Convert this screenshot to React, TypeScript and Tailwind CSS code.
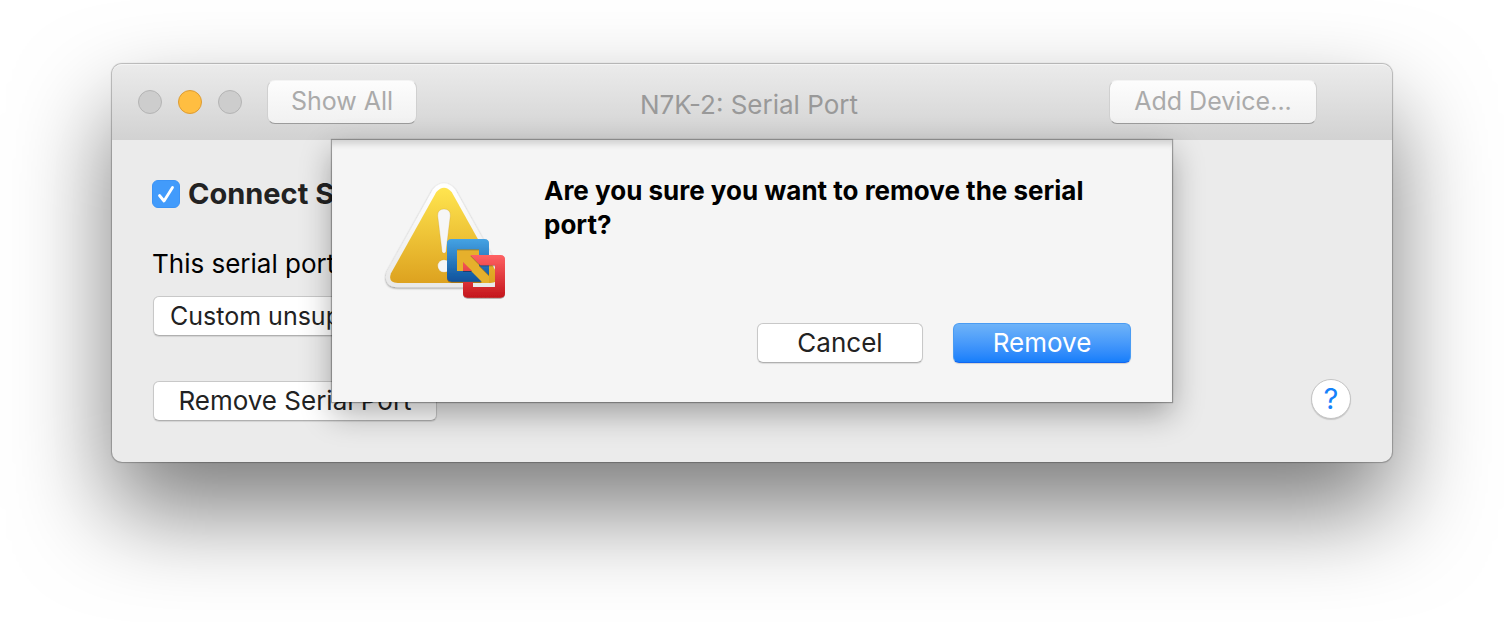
import React from "react";

function WarningIcon() {
  return (
    <svg viewBox="18 18 384 384" className="h-32 w-32 shrink-0" aria-hidden="true">
      <defs>
        <linearGradient id="tri" x1="0" y1="0" x2="0" y2="1">
          <stop offset="0" stopColor="#ffe54f" />
          <stop offset="1" stopColor="#dda21f" />
        </linearGradient>
        <linearGradient id="edge" x1="0" y1="0" x2="0" y2="1">
          <stop offset="0" stopColor="#ffffff" />
          <stop offset="1" stopColor="#e9e9e9" />
        </linearGradient>
        <linearGradient id="blue" x1="0" y1="0" x2="0" y2="1">
          <stop offset="0" stopColor="#45a3e4" />
          <stop offset="1" stopColor="#0f529c" />
        </linearGradient>
        <linearGradient id="red" gradientUnits="userSpaceOnUse" x1="0" y1="255" x2="0" y2="383">
          <stop offset="0" stopColor="#ff6163" />
          <stop offset="1" stopColor="#c4161c" />
        </linearGradient>
        <filter id="drop" x="-10%" y="-10%" width="120%" height="125%">
          <feDropShadow dx="0" dy="3" stdDeviation="3" floodColor="#000" floodOpacity="0.45" />
        </filter>
        <filter id="lift" x="-10%" y="-10%" width="120%" height="120%">
          <feDropShadow dx="0" dy="2" stdDeviation="1" floodColor="#200" floodOpacity="0.55" />
        </filter>
      </defs>
      <path
        d="M184 66Q207 40 230 66L366 310Q376 339 346 339H68Q38 339 48 310Z"
        fill="url(#edge)"
        stroke="url(#edge)"
        strokeWidth="26"
        strokeLinejoin="round"
        filter="url(#drop)"
      />
      <path d="M184 66Q207 40 230 66L366 310Q376 339 346 339H68Q38 339 48 310Z" fill="url(#tri)" />
      <g fill="#f6f6f6" stroke="#b98a1a" strokeOpacity="0.35" strokeWidth="2">
        <path d="M188 137Q188 117 207 117T226 137L213 244Q212 250 207 250T201 244Z" />
        <circle cx="207" cy="288" r="19" />
      </g>
      <path d="M246 238H312V286L342 316V339H322L264 280V303H246Z" fill="#e6b02c" />
      <g filter="url(#lift)">
        <path
          fill="url(#blue)"
          d="M230 207H328Q342 207 342 221V316L312 286V238H246V303H288L320 335H230Q216 335 216 321V221Q216 207 230 207Z"
        />
      </g>
      <g filter="url(#lift)">
        <path
          fill="url(#red)"
          d="M286 255H376Q390 255 390 269V369Q390 383 376 383H278Q264 383 264 369V336H294V351H360V286H316Z"
        />
        <path fill="url(#red)" d="M264 276L291 303H264Z" />
      </g>
    </svg>
  );
}

const control =
  "h-10 rounded-md border border-[#c8c8c8] border-b-[#b0b0b0] bg-white leading-8 text-[#222] shadow-[0_1px_1px_rgba(0,0,0,0.1)]";

const pushButton = `${control} flex items-center justify-center text-[26px]`;

const toolbarButton =
  "flex h-11 items-center justify-center whitespace-nowrap rounded-lg border border-[#d0d0d0] border-t-[#f4f4f4] border-b-[#9c9c9c] bg-linear-to-b from-[#fdfdfd] to-[#f1f1f1] pb-0.5 text-[25px] leading-8 text-[#aaa]";

function Toolbar() {
  return (
    <header className="grid h-[76px] grid-cols-[1fr_auto_1fr] items-center rounded-t-[10px] border-t border-[#f4f4f4] bg-linear-to-b from-[#ebebeb] to-[#d2d2d2]">
      <div className="flex items-center pb-0.5 pl-[26px]">
        <div className="flex gap-4">
          <button aria-label="Close" className="size-6 rounded-full border border-[#b4b4b4] bg-[#cdcdcd]" />
          <button aria-label="Minimize" className="size-6 rounded-full border border-[#dd9c33] bg-[#ffbe41]" />
          <button aria-label="Zoom" className="size-6 rounded-full border border-[#b4b4b4] bg-[#cdcdcd]" />
        </div>
        <button className={`${toolbarButton} ml-[25px] w-[150px]`}>Show All</button>
      </div>
      <h1 className="pt-1 pr-1.5 text-[26px] leading-8 text-[#999]">N7K-2: Serial Port</h1>
      <div className="flex justify-end pr-[75px] pb-0.5">
        <button className={`${toolbarButton} w-52`}>Add Device...</button>
      </div>
    </header>
  );
}

function SettingsPane() {
  return (
    <section className="px-10 pt-9 pb-[41px]">
      <div className="flex h-9 items-center gap-2">
        <span className="relative size-7">
          <input
            id="connect"
            type="checkbox"
            defaultChecked
            className="block size-7 appearance-none rounded-md border border-[#3b93f5] bg-[#429bfb]"
          />
          <svg viewBox="0 0 28 28" className="pointer-events-none absolute inset-0 size-7" aria-hidden="true">
            <path d="M7.5 15.5L12 21L20.5 7.5" fill="none" stroke="#fff" strokeWidth="2.8" strokeLinecap="round" strokeLinejoin="round" />
          </svg>
        </span>
        <label htmlFor="connect" className="text-[29px] leading-9 font-bold text-[#222]">
          Connect Serial Port
        </label>
      </div>
      <label htmlFor="target" className="mt-9 block text-[26px] leading-8 text-black">
        This serial port is configured as:
      </label>
      <select id="target" className={`${control} mt-4 ml-px block w-[420px] appearance-none px-4 text-[25px]`}>
        <option>Custom unsupported device</option>
      </select>
      <div className="mt-[43px] flex items-start justify-between">
        <button className={`${pushButton} mt-0.5 ml-px w-[284px]`}>Remove Serial Port</button>
        <button
          aria-label="Help"
          className="mr-px size-10 rounded-full border border-[#c4c4c4] bg-white text-[29px] leading-9 text-[#1482fb] shadow-[0_1px_1px_rgba(0,0,0,0.15)]"
        >
          ?
        </button>
      </div>
    </section>
  );
}

function ConfirmSheet() {
  return (
    <div
      role="alertdialog"
      aria-labelledby="question"
      className="absolute inset-x-[220px] top-[76px] flex bg-[#f5f5f5] pt-9 pr-[41px] pb-[39px] pl-[49px] shadow-[0_0_1px_1px_rgba(0,0,0,0.3),0_12px_30px_rgba(0,0,0,0.32),inset_0_8px_6px_-4px_rgba(0,0,0,0.15)]"
    >
      <WarningIcon />
      <div className="flex flex-1 flex-col pl-[35px]">
        <h2 id="question" className="-mt-0.5 min-h-[149px] text-[26px] leading-[34px] font-bold text-black">
          Are you sure you want to remove the serial port?
        </h2>
        <div className="flex justify-end gap-[30px]">
          <button className={`${pushButton} w-[166px]`}>Cancel</button>
          <button className="flex h-10 w-[178px] items-center justify-center rounded-md border border-[#4a9cf3] border-b-[#1166f0] bg-linear-to-b from-[#6eb3f8] to-[#157efb] text-[26px] leading-8 text-white shadow-[0_1px_1px_rgba(0,0,0,0.15)]">
            Remove
          </button>
        </div>
      </div>
    </div>
  );
}

export default function App() {
  return (
    <main className="min-h-screen overflow-hidden bg-white px-28 pt-16 pb-40 font-['Inter',sans-serif]">
      <div className="relative rounded-[10px] bg-[#ebebeb] shadow-[0_0_1px_1px_rgba(0,0,0,0.25),0_48px_96px_rgba(0,0,0,0.52)]">
        <Toolbar />
        <SettingsPane />
        <ConfirmSheet />
      </div>
    </main>
  );
}
